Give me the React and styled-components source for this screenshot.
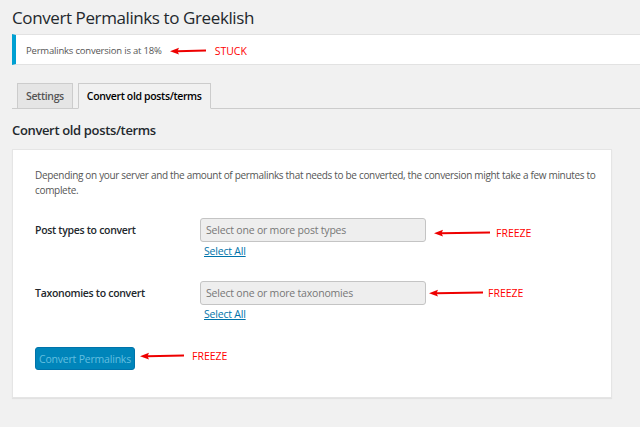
import React from "react";
import styled, { createGlobalStyle } from "styled-components";

const Global = createGlobalStyle`
  html, body { margin: 0; padding: 0; background: #f1f1f1; }
  body { font-family: "Open Sans", "Noto Sans", sans-serif; color: #444; }
  * { box-sizing: border-box; }
`;

const Wrap = styled.div`
  padding: 5px 0 30px 12px;
  width: 640px;
  overflow: hidden;
`;

const Title = styled.h1`
  margin: 0;
  font-size: 17px;
  font-weight: 400;
  line-height: 26px;
  color: #23282d;
  letter-spacing: -0.4px;
`;

const Notice = styled.div`
  margin-top: 3px;
  height: 31px;
  display: flex;
  align-items: center;
  padding: 2px 0 0 10px;
  background: #fff;
  border-left: 4px solid #00a0d2;
  border-top: 1px solid #e2e2e2;
  border-bottom: 1px solid #e2e2e2;
  font-size: 9.5px;
  color: #555;
  letter-spacing: -0.2px;
`;

const Note = styled.span`
  display: inline-flex;
  align-items: center;
  color: #f00;
  font-size: 10.5px;
  letter-spacing: 0;
  margin-left: ${(p) => p.$gap}px;
  transform: translateY(${(p) => p.$dy || 0}px);
`;

const Arrow = ({ w, gap = 8 }) => (
  <svg width={w} height="8" viewBox={`0 0 ${w} 8`} style={{ marginRight: gap, flex: "none" }}>
    <path d={`M${w - 1} 3.6 L8 4.2`} stroke="#e00" strokeWidth="2" fill="none" />
    <path d="M1 4.3 L10 0.8 L8.5 4.2 L10 7.4 Z" fill="#e00" />
  </svg>
);

const Tabs = styled.nav`
  margin-top: 17px;
  display: flex;
  gap: 5px;
  padding-left: 5px;
  border-bottom: 1px solid #ccc;
  height: 27px;
  align-items: flex-end;
`;

const Tab = styled.div`
  height: 26px;
  margin-bottom: -1px;
  padding: 0 8px;
  display: flex;
  align-items: center;
  border: 1px solid #ccc;
  border-bottom-color: ${(p) => (p.$active ? "#f1f1f1" : "#ccc")};
  background: ${(p) => (p.$active ? "#f1f1f1" : "#e5e5e5")};
  color: ${(p) => (p.$active ? "#000" : "#555")};
  font-size: 10.5px;
  font-weight: 600;
  letter-spacing: -0.35px;
`;

const Heading = styled.h2`
  margin: 11px 0 0;
  font-size: 13px;
  font-weight: 600;
  line-height: 20px;
  color: #23282d;
  letter-spacing: -0.35px;
`;

const Card = styled.section`
  margin-top: 9px;
  width: 600px;
  background: #fff;
  border: 1px solid #e5e5e5;
  box-shadow: 0 1px 1px rgba(0, 0, 0, 0.06);
  padding: 18px 6px 27px 22px;
`;

const Desc = styled.p`
  margin: 0;
  font-size: 10px;
  line-height: 15px;
  color: #555;
  letter-spacing: -0.32px;
`;

const FieldRow = styled.div`
  display: flex;
  align-items: flex-start;
  margin-top: ${(p) => p.$top}px;
`;

const Label = styled.div`
  width: 165px;
  padding-top: 5px;
  font-size: 10.5px;
  font-weight: 600;
  color: #23282d;
  letter-spacing: -0.3px;
`;

const Field = styled.div`
  display: flex;
  flex-direction: column;
  align-items: flex-start;
`;

const SelectLine = styled.div`
  display: flex;
  align-items: center;
`;

const Select = styled.div`
  width: 226px;
  height: 24px;
  display: flex;
  align-items: center;
  padding-left: 5px;
  background: #eee;
  border: 1px solid #c4c4c4;
  border-radius: 3px;
  font-size: 10.5px;
  color: #777;
  letter-spacing: -0.2px;
`;

const SelectAll = styled.a`
  margin: 2px 0 0 4px;
  font-size: 10.5px;
  color: #0073aa;
  text-decoration: underline;
  letter-spacing: -0.2px;
`;

const ButtonLine = styled.div`
  display: flex;
  align-items: center;
  margin-top: 26px;
`;

const Button = styled.button`
  width: 100px;
  height: 23px;
  padding: 0;
  border: 1px solid #0073aa;
  border-radius: 3px;
  background: #0085ba;
  color: #62bfe0;
  font-family: inherit;
  font-size: 10.5px;
  letter-spacing: -0.2px;
`;

export default function App() {
  return (
    <>
      <Global />
      <Wrap>
        <Title>Convert Permalinks to Greeklish</Title>
        <Notice>
          Permalinks conversion is at 18%
          <Note $gap={7}>
            <Arrow w={38} />
            STUCK
          </Note>
        </Notice>
        <Tabs>
          <Tab>Settings</Tab>
          <Tab $active>Convert old posts/terms</Tab>
        </Tabs>
        <Heading>Convert old posts/terms</Heading>
        <Card>
          <Desc>
            Depending on your server and the amount of permalinks that needs to be converted, the
            conversion might take a few minutes to complete.
          </Desc>
          <FieldRow $top={20}>
            <Label>Post types to convert</Label>
            <Field>
              <SelectLine>
                <Select>Select one or more post types</Select>
                <Note $gap={7} $dy={3}>
                  <Arrow w={58} gap={5} />
                  FREEZE
                </Note>
              </SelectLine>
              <SelectAll href="#">Select All</SelectAll>
            </Field>
          </FieldRow>
          <FieldRow $top={23}>
            <Label>Taxonomies to convert</Label>
            <Field>
              <SelectLine>
                <Select>Select one or more taxonomies</Select>
                <Note $gap={2}>
                  <Arrow w={56} gap={4} />
                  FREEZE
                </Note>
              </SelectLine>
              <SelectAll href="#">Select All</SelectAll>
            </Field>
          </FieldRow>
          <ButtonLine>
            <Button>Convert Permalinks</Button>
            <Note $gap={4} $dy={-3}>
              <Arrow w={46} gap={7} />
              FREEZE
            </Note>
          </ButtonLine>
        </Card>
      </Wrap>
    </>
  );
}
